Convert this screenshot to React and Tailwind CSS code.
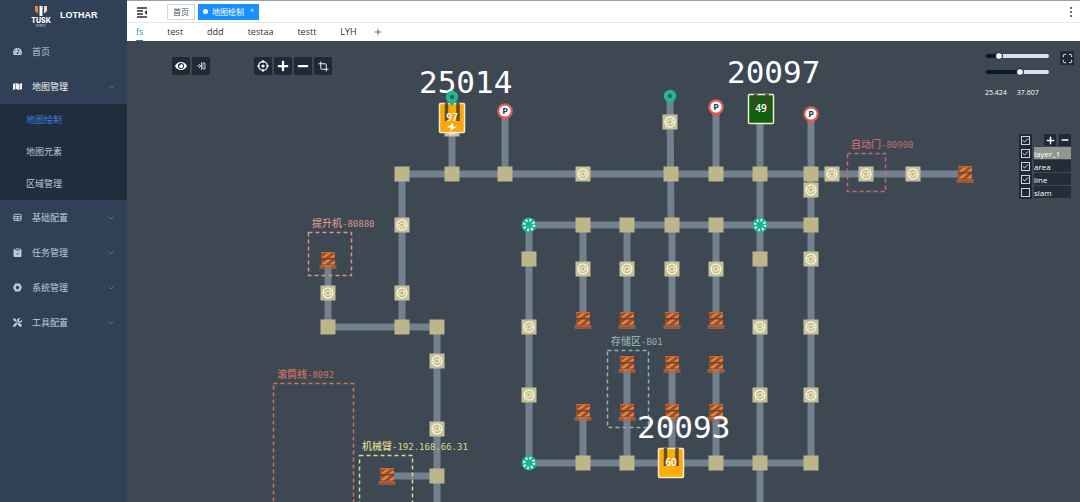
import { useState } from "react";
import { LuCrop, LuMaximize } from "react-icons/lu";
import { FaEye, FaMap, FaMinus, FaPlus, FaTachometerAlt, FaTools } from "react-icons/fa";
import { BsNutFill, BsClipboardCheckFill } from "react-icons/bs";
import { Check, ChevronDown, ChevronUp, Plus } from "lucide-react";

// ---- map data ----
const tracks = [
  [402, 174, 965, 174], [402, 174, 402, 327], [328, 259, 328, 327], [328, 327, 437, 327],
  [437, 327, 437, 520], [387, 476, 437, 476], [452, 110, 452, 174], [505, 112, 505, 174],
  [670, 98, 671, 225], [716, 108, 716, 174], [760, 108, 760, 520], [811, 115, 811, 463],
  [529, 225, 811, 225], [529, 225, 529, 463], [529, 463, 811, 463],
  [583, 225, 583, 320], [627, 225, 627, 320], [672, 225, 672, 320], [716, 225, 716, 320],
  [583, 411, 583, 463], [627, 364, 627, 463], [672, 364, 672, 463], [716, 364, 716, 463],
];

const plainNodes = [
  [402, 174], [452, 174], [505, 174], [671, 174], [716, 174], [760, 174], [811, 174],
  [328, 327], [402, 327], [437, 327], [437, 476],
  [583, 225], [627, 225], [672, 225], [716, 225], [811, 225], [529, 259], [760, 259],
  [583, 463], [627, 463], [716, 463], [760, 463], [811, 463],
];

const turnNodes = [
  [452, 129], [583, 174], [832, 174], [866, 174], [913, 174], [811, 190], [670, 122],
  [402, 225], [402, 293], [328, 293], [437, 361], [437, 429], [529, 327], [529, 395],
  [583, 269], [627, 269], [672, 269], [716, 269],
  [760, 327], [760, 395], [811, 259], [811, 327], [811, 395],
];

const shelves = [
  [965, 174], [328, 260], [387, 476],
  [583, 320], [627, 320], [672, 320], [716, 320],
  [627, 364], [672, 364], [716, 364],
  [583, 412], [627, 412], [672, 412], [716, 412],
];

const hubs = [[529, 225], [760, 225], [529, 463]];
const parkings = [[505, 111], [716, 107], [811, 114]];
const pins = [[452, 97], [670, 96]];

const areas = [
  { name: "自动门", code: "-80900", x: 847, y: 153, w: 38, h: 38, tx: 851, ty: 148, color: "#c26a70" },
  { name: "提升机", code: "-80880", x: 308, y: 232, w: 43, h: 43, tx: 312, ty: 227, color: "#d8938c" },
  { name: "存储区", code: "-B01", x: 607, y: 350, w: 41, h: 77, tx: 611, ty: 345, color: "#8fb0ae" },
  { name: "滚筒线", code: "-8092", x: 273, y: 383, w: 80, h: 140, tx: 277, ty: 378, color: "#cb7460" },
  { name: "机械臂", code: "-192.168.66.31", x: 359, y: 455, w: 53, h: 70, tx: 362, ty: 450, color: "#dcd88a" },
];

const robots = [
  { id: "25014", load: "97", x: 452, y: 118, tx: 419, ty: 93, fill: "#fba60a", charging: true },
  { id: "20097", load: "49", x: 761, y: 109, tx: 727, ty: 83, fill: "#10610f" },
  { id: "20093", load: "60", x: 671, y: 463, tx: 637, ty: 438, fill: "#fcab08" },
];

function TurnNode({ x, y }) {
  return (
    <g transform={`translate(${x} ${y})`}>
      <rect x="-7.5" y="-7.5" width="15" height="15" fill="#c5c19a" />
      <circle r="4.9" fill="#c2b98a" stroke="#f7f3d6" strokeWidth="1.5" />
      <circle r="2.2" fill="none" stroke="#f7f3d6" strokeWidth="1.1" strokeDasharray="5 1.9" />
      <path d="M2.4 -2.6V0.4H5M-2.4 2.6V-0.4H-5" fill="none" stroke="#f7f3d6" strokeWidth="0.9" />
    </g>
  );
}

function Shelf({ x, y }) {
  return (
    <g transform={`translate(${x} ${y})`}>
      <rect x="-7" y="-8" width="14" height="13" fill="#9a4f28" />
      <rect x="-7" y="-8" width="14" height="1.2" fill="#cf662b" />
      <rect x="-7" y="-1.6" width="14" height="1" fill="#5b4136" />
      <path d="M-6.5 -2.5L-0.5 -6.8H3L-3 -2.2ZM1.5 -2.2L6.8 -6V-3.2L5 -2.2Z" fill="#e3874b" />
      <path d="M-6.5 4L-0.5 -0.4H3L-3 4.4ZM1.5 4.4L6.8 0.4V3.2L5 4.4Z" fill="#e3874b" />
      <rect x="-8.5" y="5.4" width="17" height="1.3" fill="#d96e2e" />
      <rect x="-8.5" y="7.4" width="17" height="1.3" fill="#c2622f" />
    </g>
  );
}

function Hub({ x, y }) {
  return (
    <g transform={`translate(${x} ${y})`}>
      <circle r="7.5" fill="#1bb394" />
      <circle r="4.9" fill="none" stroke="#effff9" strokeWidth="2.6" strokeDasharray="1.6 2.248" />
    </g>
  );
}

function Parking({ x, y }) {
  return (
    <g transform={`translate(${x} ${y})`}>
      <path d="M-7 3.5L0 10.5L7 3.5Z" fill="#dc5a57" />
      <circle r="7.8" fill="#dc5a57" />
      <circle r="5.6" fill="#fff" />
      <text y="3" textAnchor="middle" fontSize="9" fontWeight="700" fill="#26395b">P</text>
    </g>
  );
}

function Pin({ x, y }) {
  return (
    <g transform={`translate(${x} ${y})`}>
      <path d="M-5.5 2.5L0 9L5.5 2.5Z" fill="#27ab8d" />
      <circle r="6.2" fill="#27b294" />
      <circle r="2" fill="#17594f" />
    </g>
  );
}

function Robot({ robot }) {
  return (
    <g transform={`translate(${robot.x} ${robot.y})`}>
      <rect x="-12.5" y="-14.5" width="25" height="29" rx="1" fill={robot.fill} stroke="#f3ead0" strokeWidth="1.5" />
      <path d="M-5.5 -15V3M6 -15V3" stroke="#4b3f24" strokeWidth="3.5" opacity="0.85" />
      <text y="3" textAnchor="middle" fontSize="10" fontWeight="600" fill="#fff">{robot.load}</text>
      {robot.charging && <path d="M1 5L-5 9.4H-1L-2 13L5 8.4H1Z" fill="#fff" />}
    </g>
  );
}

function MapCanvas() {
  return (
    <svg
      className="absolute inset-0 h-full w-full font-['Open_Sans',sans-serif]"
      viewBox="127 41 953 461"
      preserveAspectRatio="xMinYMin slice"
    >
      <g stroke="#73818f" strokeWidth="7">
        {tracks.map(([x1, y1, x2, y2], i) => (
          <line key={i} x1={x1} y1={y1} x2={x2} y2={y2} />
        ))}
      </g>
      {plainNodes.map(([x, y], i) => (
        <rect key={i} x={x - 7.5} y={y - 7.5} width="15" height="15" fill="#bcb68a" />
      ))}
      {turnNodes.map(([x, y], i) => <TurnNode key={i} x={x} y={y} />)}
      {shelves.map(([x, y], i) => <Shelf key={i} x={x} y={y} />)}
      {hubs.map(([x, y], i) => <Hub key={i} x={x} y={y} />)}
      {parkings.map(([x, y], i) => <Parking key={i} x={x} y={y} />)}

      {/* areas */}
      {areas.map((a) => (
        <g key={a.name}>
          <rect x={a.x + 0.5} y={a.y + 0.5} width={a.w} height={a.h} fill="none" stroke={a.color} strokeWidth="1.5" strokeDasharray="4 3" />
          <text x={a.tx} y={a.ty} fill={a.color} fontWeight="500" className="font-['DejaVu_Sans_Mono','Noto_Sans_CJK_SC',monospace]">
            <tspan fontSize="10">{a.name}</tspan>
            <tspan fontSize="9">{a.code}</tspan>
          </text>
        </g>
      ))}

      {/* robots */}
      {robots.map((r) => <Robot key={r.id} robot={r} />)}
      {robots.map((r) => (
        <text key={r.id} x={r.tx} y={r.ty} fontSize="31" fill="#fff" className="font-['DejaVu_Sans_Mono',monospace]">
          {r.id}
        </text>
      ))}
      {pins.map(([x, y], i) => <Pin key={i} x={x} y={y} />)}
    </svg>
  );
}

function TableIcon({ className }) {
  return (
    <svg className={className} viewBox="0 0 10 10" fill="none" stroke="currentColor" strokeWidth="1">
      <rect x="1" y="1.5" width="8" height="7" rx="1" />
      <path d="M1 4H9M1 6.3H9M5 4V8.5" />
    </svg>
  );
}

const menu = [
  { label: "首页", icon: FaTachometerAlt },
  { label: "地图管理", icon: FaMap, open: true, children: ["地图绘制", "地图元素", "区域管理"] },
  { label: "基础配置", icon: TableIcon, arrow: true },
  { label: "任务管理", icon: BsClipboardCheckFill, arrow: true },
  { label: "系统管理", icon: BsNutFill, arrow: true },
  { label: "工具配置", icon: FaTools, arrow: true },
];

function Sidebar() {
  return (
    <aside className="w-[127px] shrink-0 bg-[#304057] text-[#bfcbd9]">
      <div className="flex h-[34px] items-center gap-2 pl-[30px]">
        <svg className="h-6 w-[22px]" viewBox="0 0 22 24">
          <path d="M5 1H8V8H7L5 6Z" fill="#e08a2c" />
          <path d="M9.5 1H12.5V11H9.5Z" fill="#fff" />
          <path d="M14 1H17V6L15 8H14Z" fill="#f2d9b8" />
          <text x="11" y="18" textAnchor="middle" fontSize="7" fontWeight="800" fill="#fff" fontFamily="Inter, sans-serif">TUSK</text>
          <text x="11" y="22" textAnchor="middle" fontSize="3" fill="#cbd5e1" fontFamily="Inter, sans-serif">ROBOT</text>
        </svg>
        <span className="pb-[2px] font-['Liberation_Sans',sans-serif] text-[9px] font-bold text-white">LOTHAR</span>
      </div>
      <nav>
        {menu.map(({ label, icon: Icon, open, children, arrow }) => (
          <div key={label}>
            <a href="#" className={`flex h-[35px] items-center pr-3 pl-3 text-[9px] ${open ? "text-[#f4f4f5]" : ""}`}>
              <span className="flex w-[10px] justify-center">
                <Icon className="h-[9px] w-[9px]" />
              </span>
              <span className="ml-[10px] flex-1">{label}</span>
              {open && <ChevronUp className="h-2 w-2 text-[#7b8a9e]" />}
              {arrow && <ChevronDown className="h-2 w-2 text-[#7b8a9e]" />}
            </a>
            {children && (
              <div className="bg-[#1f2d3d]">
                {children.map((c, i) => (
                  <a key={c} href="#" className={`flex h-8 items-center pl-[26px] text-[9px] ${i === 0 ? "text-[#3d7fe0]" : ""}`}>
                    {c}
                  </a>
                ))}
              </div>
            )}
          </div>
        ))}
      </nav>
    </aside>
  );
}

function TopBar() {
  return (
    <header className="flex h-[23px] items-center border-t border-b border-t-gray-400 border-b-gray-200 bg-white pr-2 pl-2">
      <button type="button" aria-label="Toggle menu">
        <svg className="h-3 w-4" viewBox="0 0 16 12" fill="none" stroke="#2b2f36" strokeWidth="1.3">
          <path d="M2 2H12M2 5H8M2 8H8M2 11H12" />
          <path d="M12 4L9.5 6.5L12 9Z" fill="#2b2f36" stroke="none" />
        </svg>
      </button>
      <a href="#" className="ml-4 flex h-4 items-center border border-gray-300 px-[5px] text-[8px] text-[#495060]">首页</a>
      <a href="#" className="ml-[3px] flex h-4 items-center bg-[#1890ff] px-[5px] text-[8px] text-white">
        <span className="mr-1 h-[5px] w-[5px] rounded-full bg-white"></span>
        地图绘制
        <span className="ml-[6px] text-[7px]">×</span>
      </a>
      <button type="button" aria-label="More" className="ml-auto flex flex-col gap-[2px]">
        <span className="h-[2px] w-[2px] rounded-full bg-gray-700"></span>
        <span className="h-[2px] w-[2px] rounded-full bg-gray-700"></span>
        <span className="h-[2px] w-[2px] rounded-full bg-gray-700"></span>
      </button>
    </header>
  );
}

function MapTabs() {
  const [active, setActive] = useState("fs");
  return (
    <div className="flex h-[18px] items-stretch bg-white pl-[9px] text-[9px] text-[#303133]">
      <div className="flex items-stretch gap-6">
        {["fs", "test", "ddd", "testaa", "testt", "LYH"].map((t) => (
          <button
            key={t}
            type="button"
            onClick={() => setActive(t)}
            className={`border-b ${t === active ? "border-[#2a7ea6] text-[#2a8fbd]" : "border-transparent"}`}
          >
            {t}
          </button>
        ))}
      </div>
      <button type="button" aria-label="Add map" className="ml-4 text-gray-600">
        <Plus className="h-[10px] w-[10px]" strokeWidth={2} />
      </button>
    </div>
  );
}

function ToolButton({ label, children }) {
  return (
    <button type="button" aria-label={label} className="flex h-[18px] w-[18px] items-center justify-center rounded-xs bg-[#1f2a36] text-white">
      {children}
    </button>
  );
}

function Toolbar() {
  return (
    <div className="absolute top-4 left-[45px] flex gap-[2px]">
      <ToolButton label="Show"><FaEye className="h-3 w-3" /></ToolButton>
      <ToolButton label="Mirror">
        <svg className="h-[10px] w-[10px]" viewBox="0 0 10 10" fill="none" stroke="#b9c2cc" strokeWidth="1">
          <path d="M1 5H4M3 3L5 5L3 7M5.5 1V9M7 2H9V8H7Z" />
        </svg>
      </ToolButton>
      <div className="w-10"></div>
      <ToolButton label="Center">
        <svg className="h-3 w-3" viewBox="0 0 12 12" fill="none" stroke="#fff" strokeWidth="1.2">
          <circle cx="6" cy="6" r="4.4" />
          <circle cx="6" cy="6" r="1" fill="#fff" />
          <path d="M6 0V3M6 9V12M0 6H3M9 6H12" />
        </svg>
      </ToolButton>
      <ToolButton label="Zoom in"><FaPlus className="h-3 w-3" /></ToolButton>
      <ToolButton label="Zoom out"><FaMinus className="h-3 w-3" /></ToolButton>
      <ToolButton label="Crop"><LuCrop className="h-[11px] w-[11px]" /></ToolButton>
    </div>
  );
}

function Slider({ label, value, onChange }) {
  return (
    <div className="relative flex h-4 w-16 items-center">
      <div className="h-1 w-full overflow-hidden rounded-full bg-[#d9e0ea]">
        <div className="h-full bg-[#06182a]" style={{ width: `${value}%` }}></div>
      </div>
      <input
        type="range"
        aria-label={label}
        value={value}
        onChange={(e) => onChange(Number(e.target.value))}
        className="absolute inset-0 w-full appearance-none bg-transparent [&::-webkit-slider-thumb]:h-2 [&::-webkit-slider-thumb]:w-2 [&::-webkit-slider-thumb]:appearance-none [&::-webkit-slider-thumb]:rounded-full [&::-webkit-slider-thumb]:border [&::-webkit-slider-thumb]:border-[#06182a] [&::-webkit-slider-thumb]:bg-white"
      />
    </div>
  );
}

function ViewControls() {
  const [scale, setScale] = useState(18);
  const [size, setSize] = useState(56);
  return (
    <div className="absolute top-[7px] right-[6px] flex items-start gap-[11px]">
      <div className="text-[7px] text-white">
        <Slider label="Scale" value={scale} onChange={setScale} />
        <Slider label="Size" value={size} onChange={setSize} />
        <div className="mt-2 flex gap-[10px]">
          <span>25.424</span>
          <span>37.607</span>
        </div>
      </div>
      <button type="button" aria-label="Fullscreen" className="mt-[3px] flex h-[14px] w-[14px] items-center justify-center bg-[#1f2a36] text-white">
        <LuMaximize className="h-[11px] w-[11px]" />
      </button>
    </div>
  );
}

function LayerCheck({ id, label, checked, onChange }) {
  return (
    <span className="relative flex h-[13px] w-[13px] shrink-0 items-center justify-center bg-[#1f2a36]">
      <input
        id={id}
        type="checkbox"
        aria-label={label}
        checked={checked}
        onChange={onChange}
        className="h-[9px] w-[9px] appearance-none border border-[#cdd3da]"
      />
      {checked && <Check className="pointer-events-none absolute h-[7px] w-[7px] text-white" strokeWidth={3} />}
    </span>
  );
}

function LayerPanel() {
  const [layers, setLayers] = useState({ all: true, layer_1: true, area: true, line: true, slam: false });
  const toggle = (key) => setLayers({ ...layers, [key]: !layers[key] });

  return (
    <div className="absolute top-[92px] right-[9px] w-[52px] text-[8px] text-white">
      <div className="flex h-[14px] items-center gap-[3px]">
        <LayerCheck id="all" label="All layers" checked={layers.all} onChange={() => toggle("all")} />
        <button type="button" aria-label="Add layer" className="ml-auto flex h-3 w-3 items-center justify-center bg-[#1f2a36]">
          <Plus className="h-[11px] w-[11px]" strokeWidth={3} />
        </button>
        <button type="button" aria-label="Remove layer" className="flex h-3 w-3 items-center justify-center bg-[#1f2a36]">
          <FaMinus className="h-2 w-2" />
        </button>
      </div>
      {["layer_1", "area", "line", "slam"].map((name, i) => (
        <div key={name} className="flex h-[13px] items-stretch gap-[2px]">
          <LayerCheck id={name} checked={layers[name]} onChange={() => toggle(name)} />
          <label htmlFor={name} className={`flex-1 border-b border-[#3e4853] leading-[14px] ${i === 0 ? "bg-[#93968f]" : "bg-[#232d38]"}`}>
            {name}
          </label>
        </div>
      ))}
    </div>
  );
}

export default function App() {
  return (
    <div className="flex min-h-screen font-['Open_Sans','Noto_Sans_CJK_SC',sans-serif]">
      <Sidebar />
      <div className="flex min-w-0 flex-1 flex-col">
        <TopBar />
        <MapTabs />
        <main className="relative flex-1 overflow-hidden bg-[#3e4853]">
          <MapCanvas />
          <Toolbar />
          <ViewControls />
          <LayerPanel />
        </main>
      </div>
    </div>
  );
}
